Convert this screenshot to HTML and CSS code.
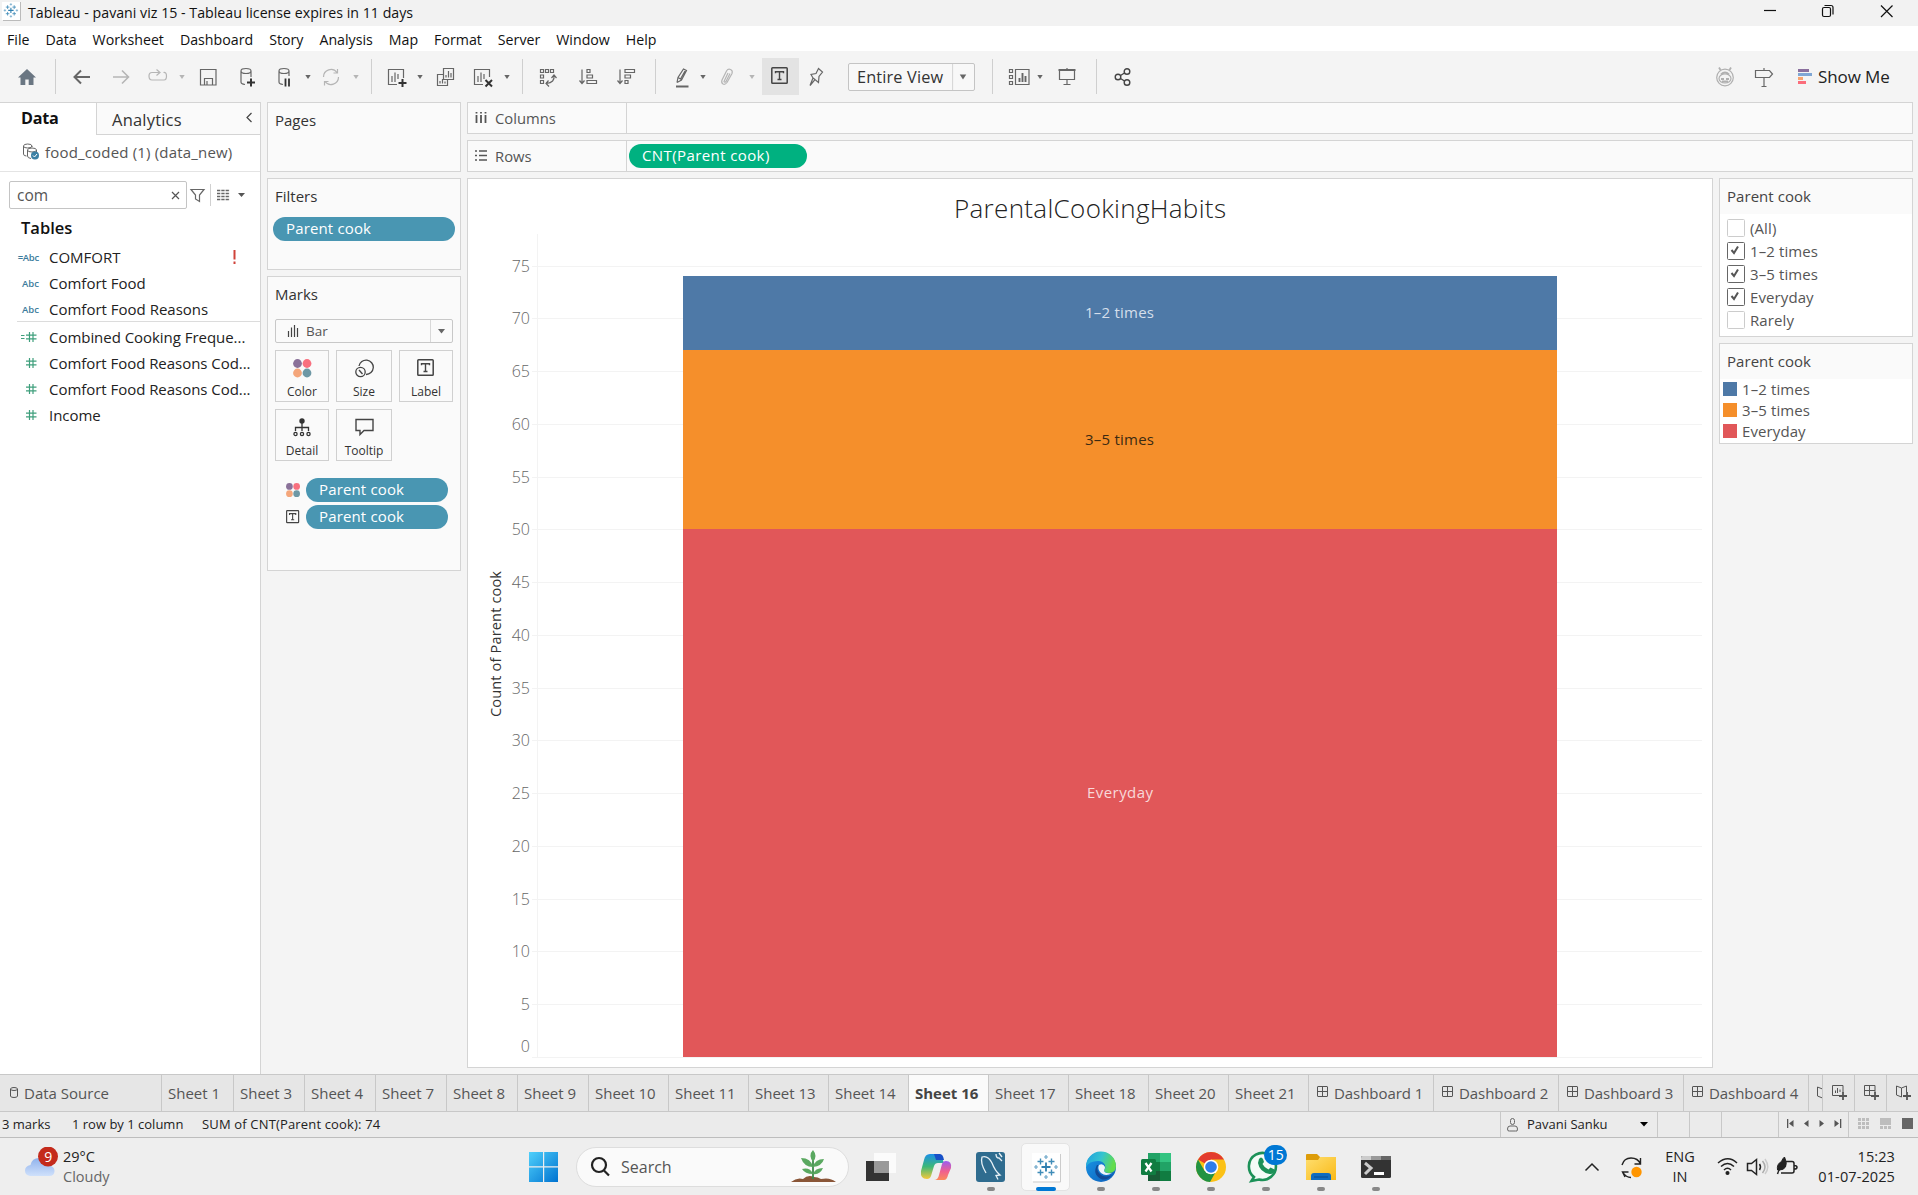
FILE: index.html
```html
<!DOCTYPE html>
<html lang="en">
<head>
<meta charset="utf-8">
<title>Tableau - pavani viz 15</title>
<link rel="stylesheet" href="styles.css">
</head>
<body>
<svg class="defs" width="0" height="0">
  <defs>
    <linearGradient id="win" x1="0" y1="0" x2="1" y2="1"><stop offset="0" stop-color="#4fd0fb"/><stop offset="1" stop-color="#0072d0"/></linearGradient>
    <linearGradient id="cloud" x1="0" y1="0" x2="0" y2="1"><stop offset="0" stop-color="#8fb2ec"/><stop offset="1" stop-color="#cfe0fb"/></linearGradient>
    <linearGradient id="cpl" x1="0" y1="0" x2="0" y2="1"><stop offset="0" stop-color="#1b8fe8"/><stop offset=".5" stop-color="#3cb878"/><stop offset="1" stop-color="#f6c83a"/></linearGradient>
    <linearGradient id="cpr" x1="0" y1="0" x2="0" y2="1"><stop offset="0" stop-color="#9a5cf0"/><stop offset=".55" stop-color="#f0608f"/><stop offset="1" stop-color="#fb8a5a"/></linearGradient>
    <linearGradient id="edge1" x1="0" y1="0" x2="1" y2=".3"><stop offset="0" stop-color="#1f9fe0"/><stop offset=".55" stop-color="#35c4cf"/><stop offset="1" stop-color="#62dc4c"/></linearGradient>
    <linearGradient id="edge2" x1="0" y1="0" x2="1" y2="1"><stop offset="0" stop-color="#1a9ae8"/><stop offset="1" stop-color="#0c5cb8"/></linearGradient>
    <linearGradient id="fold" x1="0" y1="0" x2="1" y2="1"><stop offset="0" stop-color="#ffdf70"/><stop offset="1" stop-color="#f9b917"/></linearGradient>
    <g id="logo" fill="none">
      <path d="M14 9.5v9M9.5 14h9" stroke="#2f7fb0" stroke-width="1.8"/>
      <path d="M8.5 5.5v6M5.5 8.500h6M19.500 5.500v6M16.500 8.500h6M8.500 16.500v6M5.500 19.500h6M19.500 16.500v6M16.500 19.500h6" stroke="#3f8cb8" stroke-width="1.400"/>
      <path d="M14 2v4M12 4h4M14 22v4M12 24h4M4 12v4M2 14h4M24 12v4M22 14h4" stroke="#6aa5c8" stroke-width="1.200"/>
    </g>
    <g id="dots"><circle cx="4.500" cy="4.500" r="4.400" fill="#8a7199"/><circle cx="14" cy="4.500" r="4.400" fill="#f8707f"/><circle cx="4.500" cy="14" r="4.400" fill="#f4a67b"/><circle cx="14" cy="14" r="4.400" fill="#6e98a5"/></g>
    <g id="tbox" fill="none" stroke="#444"><rect x=".8" y=".8" width="15.400" height="15.400" rx=".8" stroke-width="1.500"/><path d="M4.500 6.300V4.700h8v1.600M8.500 4.700v8M6.500 12.500h4" stroke-width="1.400"/></g>
    <g id="dash" fill="none" stroke="#555"><rect x=".5" y=".5" width="10" height="10" rx=".5"/><path d="M5.500 0v11M0 5.500h11"/></g>
    <g id="hash" fill="none" stroke="#3f9f7c" stroke-width="1.200"><path d="M3.500 0v10M7 0v10M0 3.200h10.500M0 6.800h10.500"/></g>
    <path id="caret" d="M-2.700-2h5.400L0 2z"/>
  </defs>
</svg>

<header class="titlebar">
  <svg width="28" height="26"><rect x="2" y="2" width="18" height="18" fill="#fff"/><path d="M20.500 2v18.500H3" stroke="#bbb" fill="none"/><use href="#logo" transform="translate(2.500 2) scale(.6)"/></svg>
  <span class="title">Tableau - pavani viz 15 - Tableau license expires in 11 days</span>
  <svg class="winctl" width="160" height="26" fill="none" stroke="#111" stroke-width="1.200"><path d="M6 10.500h12"/><rect x="64.500" y="7.500" width="8" height="9" rx="1.500"/><path d="M66.500 5.500h6.500q2 0 2 2v7"/><path d="M123 5.500l11.500 11.500M134.500 5.500L123 17"/></svg>
</header>

<nav class="menubar"><span>File</span><span>Data</span><span>Worksheet</span><span>Dashboard</span><span>Story</span><span>Analysis</span><span>Map</span><span>Format</span><span>Server</span><span>Window</span><span>Help</span></nav>

<div class="toolbar">
  <svg class="solid" width="40" height="24"><path d="M12 4L3 12.500h2.500V20h4.800v-5.500h3.400V20h4.800v-7.500H21z" fill="#6a7682"/></svg>
  <svg class="sep" width="15" height="35"><path d="M.5 0v35"/></svg>
  <svg width="39" height="24"><path d="M20 12H5M11 5.500L4.500 12l6.500 6.500" stroke-width="2"/></svg>
  <svg width="37" height="24" class="off"><path d="M4 12h15M13 5.500l6.500 6.500-6.500 6.500" stroke-width="1.600"/></svg>
  <svg width="50" height="24" class="off"><path d="M13 7.500H6q-3 0-3 3.500 0 4 3 4h12q2.500 0 2.500-4t-3-3.500M10.500 4.500l3.500 3-3.500 3"/><use href="#caret" x="36" y="12"/></svg>
  <svg width="38" height="24"><path d="M4.500 4.500h15.500v15.500H4.500zM8.500 19.500v-6h8v6M11 19.500v-3.500"/></svg>
  <svg width="38" height="24"><path d="M17 12V6M7 6v11q0 2 4 2.500M7 6q0-2.500 5-2.500t5 2.500-5 2.500-5-2.500"/><path d="M17 13.500v8M13 17.500h8" stroke="#333" stroke-width="2"/></svg>
  <svg width="47" height="24"><path d="M17 11V6M7 6v11q0 2 4 2.500M7 6q0-2.500 5-2.500t5 2.500-5 2.500-5-2.500"/><path d="M13.500 13.500v8M17 13.500v8" stroke="#333" stroke-width="1.800"/><use href="#caret" x="36" y="12"/></svg>
  <svg width="52" height="24" class="off"><path d="M4.500 12a7.500 7.500 0 0 1 13.500-4.500M19.500 12a7.500 7.500 0 0 1-13.500 4.500M18.500 4v4h-4M5.500 20.500v-4h4"/><use href="#caret" x="37" y="12"/></svg>
  <svg class="sep" width="13" height="35"><path d="M.5 0v35"/></svg>
  <svg width="49" height="24"><path d="M13 19.500H4.500v-15h15V13M8 11v6M11 7.500V17M14 9v5"/><path d="M18.500 14v8M14.500 18h8" stroke="#333" stroke-width="2"/><use href="#caret" x="36" y="12"/></svg>
  <svg width="38" height="24"><path d="M10.500 3.500h10v11h-10zM13 12.500V10M15.500 12.500V6M18 12.500V8M10 9.500H4.500v11H14.500V15M7 18.500V16M9.500 18.500V14M12 18.500v-2"/></svg>
  <svg width="51" height="24"><path d="M12 19.500H3.500v-15h15V12M7 11v6M10 7.500V17M13 9v5"/><path d="M14.500 15l6.500 6.500M21 15l-6.500 6.500" stroke="#333" stroke-width="2"/><use href="#caret" x="36" y="12"/></svg>
  <svg class="sep" width="14" height="35"><path d="M.5 0v35"/></svg>
  <svg width="40" height="24"><path d="M4.500 4.500h3v3h-3zM9.500 4.500h3v3h-3zM14.500 4.500h3v3h-3zM4.500 10h3v3h-3zM4.500 15.500h3v3h-3zM18 10.500q1 7-7.500 8M15.500 13l2.500-3 2.500 3M12.500 15.500l-2.500 3 3 3"/></svg>
  <svg width="38" height="24"><path d="M6 4.500V18M3.500 15.500L6 18.500l2.500-3M11 4.500h3v3h-3zM11 10h5.500v3H11zM11 15.500h9.500v3H11z"/></svg>
  <svg width="41" height="24"><path d="M6 4.500V18M3.500 15.500L6 18.500l2.500-3M11 4.500h9.500v3H11zM11 10h5.500v3H11zM11 15.500h3v3h-3z"/></svg>
  <svg class="sep" width="15" height="35"><path d="M.5 0v35"/></svg>
  <svg width="46" height="24"><path d="M7 17.500l1-5L13.500 4l3 1.500-5 9.500-4.500 2.500M8 12.500l3.500 2M15 6l-4.500 8"/><path d="M6 21.500h12.500" stroke-width="2"/><use href="#caret" x="33" y="12"/></svg>
  <svg width="46" height="24" class="off"><path d="M11 17.500l5-9q1-3-1.500-4T10.500 6l-4.500 9q-1 3 1 4t4-1.500M14 8.500l-4 8q-1.500 1.500-2 0l4-8.500"/><use href="#caret" x="36" y="12"/></svg>
  <svg width="42" height="37"><rect width="37" height="37" fill="#e3e3e3" stroke="none"/><use href="#tbox" x="9" y="9"/></svg>
  <svg width="44" height="24"><path d="M14.500 3.500L12 8.500l-5 1 2 3.500-3 7.500 5-6 3.500 3 .5-6 3.500-4.500zM9 13l2 1.500"/></svg>
  <div class="fit"><span>Entire View</span><svg width="22" height="26"><path d="M.5 0v26" stroke="#d8d8d8"/><use href="#caret" transform="translate(11 13) scale(1.200)"/></svg></div>
  <svg class="sep" width="15" height="35"><path d="M.5 0v35"/></svg>
  <svg width="48" height="24"><path d="M2.500 4.500h3v3h-3zM2.500 10.500h3v3h-3zM2.500 16.500h3v3h-3zM8.500 4.500h13.500v15H8.500z"/><path d="M12.500 17v-4M15.500 17V8M18.500 17v-6" stroke-width="1.900"/><use href="#caret" x="33" y="12"/></svg>
  <svg width="41" height="24"><path d="M4.500 5.500v9h15v-9M12 14.500v5M8.500 19.500h7M12 3v3"/><path d="M3.500 5h17" stroke-width="2"/></svg>
  <svg class="sep" width="15" height="35"><path d="M.5 0v35"/></svg>
  <svg width="40" height="24"><g stroke="#444" stroke-width="1.400"><circle cx="7" cy="12" r="2.800"/><circle cx="16" cy="6.500" r="2.800"/><circle cx="16" cy="17.500" r="2.800"/><path d="M9.500 10.500L13.500 8M9.500 13.500L13.500 16"/></g></svg>
  <div class="right">
    <svg width="39" height="24"><g stroke="#b0b0b0"><circle cx="12" cy="12.500" r="8.300"/><ellipse cx="12" cy="13.500" rx="6" ry="4.500"/><path d="M7.500 5l-1.500-2.500M16.500 5L18 2.500M8 9.500q4-4 8 0M8 14h3M13 14h3M9 16.500h6" stroke-width="1.800"/></g></svg>
    <svg width="46" height="24"><path d="M3.500 5.500h14l3 3.500-3 3.500h-14zM12 3v2.500M12 12.500v9M9.500 21.500h5" stroke-width="1.200"/></svg>
    <svg class="solid" width="20" height="24"><path d="M0 4h11v3H0z" fill="#8a6f9e"/><path d="M0 8h14v3H0z" fill="#7fa6d4"/><path d="M0 12h5v3H0z" fill="#f6a36f"/><path d="M0 16h8v3H0z" fill="#fb6d7b"/></svg>
    <span class="showme">Show Me</span>
  </div>
</div>

<main class="work">
  <aside class="data">
    <div class="tabs"><b>Data</b><span class="analytics">Analytics<svg width="8" height="12"><path d="M5.500 1L1 5.500 5.500 10" fill="none" stroke="#444" stroke-width="1.200"/></svg></span></div>
    <div class="source"><svg width="22" height="18" fill="none" stroke="#666"><path d="M.5 3v8q0 2 3 2M9 4V3M.5 3q0-2 4.200-2T9 3 4.700 5 .5 3M4.500 7v6q0 2 3.500 2.500M13.500 9V7M4.500 7q0-2 4.500-2t4.500 2-4.500 2-4.500-2"/><circle cx="12" cy="12.500" r="4" fill="#3c80a4" stroke="none"/><path d="M10 12.500l1.500 1.500 2.500-3" stroke="#fff"/></svg><span>food_coded (1) (data_new)</span></div>
    <div class="search"><div class="box"><span>com</span><svg width="9" height="9"><path d="M1 1l7 7M8 1L1 8" stroke="#555" stroke-width="1.200"/></svg></div>
      <svg width="70" height="22" fill="none" stroke="#666"><path d="M4 5.500h13L12.500 11v6.500l-4-2.500v-4z" stroke-width="1.200"/><path d="M23.500 0v22" stroke="#d0d0d0"/><path d="M30 6.500h13M30 9.500h13M30 12.500h13M30 15.500h13" stroke-dasharray="3.300 1" stroke-width="1.400"/><path d="M51 9h7l-3.500 4z" fill="#555" stroke="none"/></svg></div>
    <h3>Tables</h3>
    <ul class="fields">
      <li><i class="calc">=Abc</i><span>COMFORT</span><em><svg width="3" height="14" fill="#d0433a"><path d="M.5 0h2v9.500h-2zM.5 11.500h2V14h-2z"/></svg></em></li>
      <li><i>Abc</i><span>Comfort Food</span></li>
      <li><i>Abc</i><span>Comfort Food Reasons</span></li>
    </ul>
    <ul class="fields measures">
      <li><i><svg width="16" height="10"><path d="M0 3.500h3.500M0 6.500h3.500" stroke="#3f9f7c"/><use href="#hash" x="5"/></svg></i><span>Combined Cooking Freque...</span></li>
      <li><i><svg width="11" height="10"><use href="#hash"/></svg></i><span>Comfort Food Reasons Cod...</span></li>
      <li><i><svg width="11" height="10"><use href="#hash"/></svg></i><span>Comfort Food Reasons Cod...</span></li>
      <li><i><svg width="11" height="10"><use href="#hash"/></svg></i><span>Income</span></li>
    </ul>
  </aside>

  <aside class="cards">
    <section class="card pages"><h4>Pages</h4></section>
    <section class="card filters"><h4>Filters</h4><div class="pill">Parent cook</div></section>
    <section class="card marks"><h4>Marks</h4>
      <div class="type"><svg width="20" height="12"><path d="M2.500 6v6M5.500 2.500V12M8.500 0v12M11.500 3v9" stroke="#444" stroke-width="1.200"/></svg><span>Bar</span><svg class="dd" width="22" height="22"><path d="M.5 0v22" stroke="#d8d8d8"/><path d="M8 9h7l-3.500 4.500z" fill="#666"/></svg></div>
      <div class="grid">
        <div><svg width="19" height="19"><use href="#dots"/></svg>Color</div>
        <div><svg width="19" height="19" fill="none" stroke="#444" stroke-width="1.300"><path d="M4 7a7.200 7.200 0 1 1 7 8.500"/><circle cx="5.500" cy="13" r="4.700"/><path d="M4 11l3.500 4"/></svg>Size</div>
        <div><svg width="18" height="19"><use href="#tbox"/></svg>Label</div>
        <div><svg width="19" height="19" fill="none" stroke="#333" stroke-width="1.300"><circle cx="9" cy="3" r="2.700" fill="#333" stroke="none"/><path d="M9 3v10M2.500 13V9.500h13V13"/><circle cx="2.500" cy="16" r="1.600"/><circle cx="9" cy="16" r="1.600"/><circle cx="15.500" cy="16" r="1.600"/></svg>Detail</div>
        <div><svg width="19" height="19" fill="none" stroke="#444" stroke-width="1.400"><path d="M1 1.500h17v11H9L5 16.500v-4H1z"/></svg>Tooltip</div>
      </div>
      <div class="enc"><svg width="20" height="16"><use href="#dots" transform="translate(0 1) scale(.76)"/></svg><div class="pill">Parent cook</div></div>
      <div class="enc"><svg width="20" height="16"><use href="#tbox" transform="translate(0 1) scale(.78)"/></svg><div class="pill">Parent cook</div></div>
    </section>
  </aside>

  <div class="canvas">
    <div class="shelf"><div class="name"><svg width="12" height="12"><path d="M1.500 0v1.500M6 0v1.500M10.500 0v1.500M1.500 3v8M6 3v8M10.500 3v8" stroke="#555" stroke-width="1.800"/></svg>Columns</div></div>
    <div class="shelf"><div class="name"><svg width="12" height="12"><path d="M0 1h2M0 5.500h2M0 10h2M4 1h8M4 5.500h8M4 10h8" stroke="#555" stroke-width="1.600"/></svg>Rows</div><div class="pill green">CNT(Parent cook)</div></div>
    <div class="view">
      <svg class="chart" width="1244" height="888" viewBox="468 179 1244 888">
        <text x="954" y="217.500" class="ttl" textLength="272">ParentalCookingHabits</text>
        <path class="gl" d="M532 266.500h1170M532 318.500h1170M532 371.500h1170M532 424.500h1170M532 477.500h1170M532 529.500h1170M532 582.500h1170M532 635.500h1170M532 688.500h1170M532 740.500h1170M532 793.500h1170M532 846.500h1170M532 899.500h1170M532 951.500h1170M532 1004.500h1170M532 1057.500h1170M537.500 234v823"/>
        <path fill="#4e79a7" d="M683 276h874v74H683z"/><path fill="#f58f2b" d="M683 350h874v179H683z"/><path fill="#e15759" d="M683 529h874v528H683z"/>
        <g class="ax">
          <text x="530" y="272">75</text><text x="530" y="324">70</text><text x="530" y="377">65</text><text x="530" y="430">60</text><text x="530" y="483">55</text><text x="530" y="535">50</text><text x="530" y="588">45</text><text x="530" y="641">40</text><text x="530" y="694">35</text><text x="530" y="746">30</text><text x="530" y="799">25</text><text x="530" y="852">20</text><text x="530" y="905">15</text><text x="530" y="957">10</text><text x="530" y="1010">5</text><text x="530" y="1052">0</text>
        </g>
        <text class="axt" transform="translate(501 717) rotate(-90)" textLength="146">Count of Parent cook</text>
        <text class="lb" x="1085" y="318" textLength="69" fill="#d5dfeb">1–2 times</text>
        <text class="lb" x="1085" y="445" textLength="69" fill="#3b2a12">3–5 times</text>
        <text class="lb" x="1087" y="798" textLength="66" fill="#f8d9d9">Everyday</text>
      </svg>
      <div class="legends">
        <section class="card lf"><h4>Parent cook</h4>
          <p><svg width="18" height="18"><rect class="un" x=".5" y=".5" width="17" height="17" rx="1"/></svg>(All)</p>
          <p><svg width="18" height="18"><rect class="ck" x=".5" y=".5" width="17" height="17" rx="1"/><path d="M4.500 8l2.500 3 4-6.500"/></svg>1–2 times</p>
          <p><svg width="18" height="18"><rect class="ck" x=".5" y=".5" width="17" height="17" rx="1"/><path d="M4.500 8l2.500 3 4-6.500"/></svg>3–5 times</p>
          <p><svg width="18" height="18"><rect class="ck" x=".5" y=".5" width="17" height="17" rx="1"/><path d="M4.500 8l2.500 3 4-6.500"/></svg>Everyday</p>
          <p><svg width="18" height="18"><rect class="un" x=".5" y=".5" width="17" height="17" rx="1"/></svg>Rarely</p>
        </section>
        <section class="card lc"><h4>Parent cook</h4>
          <p><i class="c1"></i>1–2 times</p><p><i class="c2"></i>3–5 times</p><p><i class="c3"></i>Everyday</p>
        </section>
      </div>
    </div>
  </div>
</main>

<div class="sheets">
  <span class="ds"><svg width="15" height="14" fill="none" stroke="#555"><path d="M1.500 3v7q0 1.500 3.500 1.500T8.500 10V3M1.500 3Q1.500 1.500 5 1.500T8.500 3 5 4.500 1.500 3"/></svg>Data Source</span>
  <span class="s1">Sheet 1</span><span>Sheet 3</span><span>Sheet 4</span><span>Sheet 7</span><span>Sheet 8</span><span>Sheet 9</span>
  <span class="w">Sheet 10</span><span class="w">Sheet 11</span><span class="w">Sheet 13</span><span class="w">Sheet 14</span><span class="w on">Sheet 16</span><span class="w">Sheet 17</span><span class="w">Sheet 18</span><span class="w">Sheet 20</span><span class="w">Sheet 21</span>
  <span class="d"><svg width="17" height="14"><use href="#dash"/></svg>Dashboard 1</span><span class="d"><svg width="17" height="14"><use href="#dash"/></svg>Dashboard 2</span><span class="d"><svg width="17" height="14"><use href="#dash"/></svg>Dashboard 3</span><span class="d"><svg width="17" height="14"><use href="#dash"/></svg>Dashboard 4</span>
  <span class="cut"><svg width="6" height="14"><path d="M5.500 3L.5 1v9l5 2" fill="none" stroke="#555"/></svg></span>
  <span class="n"><svg width="16" height="16"><path d="M8 10.500H.5V.5h10.500v7M3.500 8V5.500M5.500 8V3M8 7V4.500" fill="none" stroke="#555"/><path d="M11 7v8M7 11h8" stroke="#555" stroke-width="1.800"/></svg></span>
  <span class="n"><svg width="16" height="16"><path d="M8 10.500H.5V.5h10.500v7M5.500 0v11M0 5.500h11" fill="none" stroke="#555"/><path d="M11 7v8M7 11h8" stroke="#555" stroke-width="1.800"/></svg></span>
  <span class="n"><svg width="16" height="16"><path d="M.5 1L5.500 3 10.500 1v6M.5 1v9l5 2V3" fill="none" stroke="#555"/><path d="M11 7v8M7 11h8" stroke="#555" stroke-width="1.800"/></svg></span>
</div>

<div class="status">
  <span class="m1">3 marks</span><span class="m2">1 row by 1 column</span><span class="m3">SUM of CNT(Parent cook): 74</span>
  <div class="user"><svg width="12" height="14" fill="none" stroke="#666"><rect x="3.500" y=".5" width="4" height="6" rx="2"/><path d="M.5 11q0-3 2.500-3h5q2.500 0 2.500 3t-2 2h-6q-2 .5-2-2z"/></svg><span>Pavani Sanku</span><svg width="8" height="5"><path d="M0 0h8L4 4.500z"/></svg></div>
  <div class="c32"></div><div class="c32"></div><div class="c57"></div>
  <div class="nav"><svg width="56" height="9" fill="#555"><path d="M1 0h1.300v9H1zM7.500 1v7L3 4.500zM22.500 1v7L18 4.500zM33.500 1v7L38 4.500zM48.500 1v7L53 4.500zM54 0h1.300v9H54z"/></svg></div>
  <svg width="68" height="25"><g fill="#bdbdbd"><path d="M9 6h3v3H9zM13 6h3v3h-3zM17 6h3v3h-3zM9 10h3v3H9zM13 10h3v3h-3zM17 10h3v3h-3zM9 14h3v3H9zM13 14h3v3h-3zM17 14h3v3h-3zM31 6h11v7H31zM31 14h3v3h-3zM35 14h3v3h-3zM39 14h3v3h-3z"/></g><path d="M53 6h11v11H53z" fill="#666"/></svg>
</div>

<footer class="taskbar">
  <div class="weather"><svg width="39" height="40"><path d="M6 29q-5-1-5-5.500T6.500 18Q8 10.500 16 11q8 1 8.500 7.500 6 .5 6 5.500T25 29z" fill="url(#cloud)"/><circle cx="24" cy="9.500" r="10" fill="#c42b1c"/><text x="20.300" y="14.500" fill="#fff" font-size="14">9</text></svg><div>29°C<br><em>Cloudy</em></div></div>
  <svg class="start" width="29" height="30" fill="url(#win)"><path d="M0 0h14v14.300H0zM15.200 0H29v14.300H15.200zM0 15.500h14V30H0zM15.200 15.500H29V30H15.200z"/></svg>
  <div class="find"><svg width="31" height="22" fill="none" stroke="#222" stroke-width="2.200"><circle cx="9" cy="9" r="7"/><path d="M14 14.500l5 5"/></svg><span>Search</span>
    <svg width="46" height="34"><path d="M0 32q6-5 12-3 5-5 11-2 4 0 7 2 9-2 15 3z" fill="#8a5638"/><path d="M22 29V6" stroke="#3f8a4a" stroke-width="1.800"/><path d="M22 12Q17 5 22 0q5 6 0 12M22 17q-9 0-12-9 10 0 12 9M22 17q9-1 11-8-9 0-11 8M22 24q-8 0-11-5 8-2 11 5M22 24q7 1 10-6-8 0-10 6" fill="#5aa860"/></svg></div>
  <div class="apps">
    <span><svg width="32" height="32"><path d="M1 10h23v20H1z" fill="#333" /><path d="M9 2h22v20H9z" fill="#fff" opacity=".75"/><path d="M9 10h15v12H9z" fill="#999"/></svg></span>
    <span><svg width="32" height="32"><path d="M8 3h10q3 0 4 4l2 5h-6q-3 0-4 3l-3 10q-1 3-4 3-7 0-6-8L4 9q1-6 6-6z" fill="url(#cpl)"/><path d="M14 3h6q3 0 4 6h-8z" fill="#1750c8"/><path d="M24 29H14q4 0 5-5l3-11q1-3 4-3 6 0 5 7l-3 7q-1 5-4 5z" fill="url(#cpr)"/></svg></span>
    <span class="run"><svg width="32" height="32"><rect x="1" y="1" width="29" height="30" rx="3" fill="#2f6c8f"/><path d="M11 22q-6-10-4-16 6-2 10 6 3 8 8 12l-4 .500 2 4M21 3q0 4 3 4l3 3M24 2l3 4" fill="none" stroke="#e8f1f6" stroke-width="1.300"/></svg></span>
    <span class="run active"><svg width="32" height="32"><path d="M2 2h28v28H2z" fill="#fff"/><path d="M30.500 3v28H3" fill="none" stroke="#ccc"/><use href="#logo" x="2" y="2"/></svg></span>
    <span class="run"><svg width="32" height="32"><circle cx="16" cy="16" r="15" fill="url(#edge2)"/><path d="M1 16A15 15 0 0 1 31 15q0 7-7 7-5 0-5-3 2-2 1-5-2-4-7-4Q4 10 1 16z" fill="url(#edge1)"/><path d="M12 14q-5 9 4 14 6 2 11-4-8 4-13-2-3-4-.5-8z" fill="#124a94"/><path d="M14 14q4-2 6 2 0 2-1 3 0 4 8 3-6 4-11 0-4-4-2-8z" fill="#eef4fa"/></svg></span>
    <span class="run"><svg width="32" height="32"><path d="M8 2h12v9H8z" fill="#21a366"/><path d="M20 2h11v9H20z" fill="#33c481"/><path d="M8 11h12v9H8z" fill="#107c41"/><path d="M20 11h11v9H20z" fill="#21a366"/><path d="M8 20h23v10H8z" fill="#185c37"/><path d="M20 20h11v10H20z" fill="#107c41"/><rect x="1" y="8" width="15" height="16" rx="1.500" fill="#107c41"/><path d="M5.500 12l6 8.500M11.500 12l-6 8.500" stroke="#fff" stroke-width="2.200"/></svg></span>
    <span class="run"><svg width="32" height="32"><circle cx="16" cy="16" r="15" fill="#fbc116"/><path d="M16 16L3 8.500A15 15 0 0 1 29 8.500H16z" fill="#e33b2e"/><path d="M3 8.500A15 15 0 0 0 15 31l6.500-11.500L9.500 19.700z" fill="#229342"/><circle cx="16" cy="16" r="7.300" fill="#fff"/><circle cx="16" cy="16" r="5.800" fill="#2f7de9"/></svg></span>
    <span class="run"><svg class="wa" width="42" height="40"><path d="M8 32a13.500 13.500 0 1 1 5 2.500L5.500 36z" fill="#f4fbf7" stroke="#1c9158" stroke-width="2.600"/><path d="M13 14q2-3 4 0l1 3-1.500 2q2 4 6 5.500l2-2 4 2q0 5-5 4.500-10-2-11.500-11z" fill="#1c9158"/><rect x="18" y="0" width="23" height="20" rx="10" fill="#0078d4"/><text x="21.800" y="15" font-size="14" fill="#fff">15</text></svg></span>
    <span class="run"><svg width="32" height="32"><path d="M1 4q0-1 1-1h10l3 3v5H1z" fill="#dd9c08"/><path d="M1 9l12 0 2-3h16v23H1z" fill="url(#fold)"/><path d="M6 29v-4q0-3 3-3h14q3 0 3 3v4z" fill="#0f6cc0"/><path d="M9 26h14" stroke="#0a4a8c"/></svg></span>
    <span class="run"><svg width="32" height="32"><rect x="1" y="5" width="30" height="22" rx="1.500" fill="#333"/><path d="M1 9V6.500Q1 5 2.500 5H11v4z" fill="#ccc"/><path d="M11 5h10v4H11z" fill="#999"/><path d="M21 5h10v4H21z" fill="#666"/><path d="M5 12l6 5-6 6" fill="none" stroke="#ccc" stroke-width="3"/><path d="M14 22.500h10" stroke="#fff" stroke-width="3"/></svg></span>
  </div>
  <div class="tray">
    <svg width="80" height="30" fill="none" stroke="#222" stroke-width="1.500"><path d="M17.500 18.500l6.500-6.500 6.500 6.500"/><path d="M54 13q2-7 9-7t9.500 6M72.500 6v6h-6M57 25l-2.500-5h6M55 20.500q3 5 8 5" stroke-width="1.400"/><circle cx="68.500" cy="20" r="5.200" fill="#ff9500" stroke="none"/></svg>
    <div class="lang">ENG<br>IN</div>
    <svg width="90" height="26" fill="none" stroke="#222" stroke-width="1.500"><path d="M6 9q10-8.500 19 0M9 12.500q6.500-6 13 0M12 16q3.500-3.500 7 0"/><circle cx="15.500" cy="19" r="1.300" fill="#222"/><path d="M35.500 9.500h4l5-4v15l-5-4h-4zM47.500 10q2 3 0 6"/><path d="M50.500 7q5 6 0 12" stroke="#aaa"/><path d="M53 5q5.500 8 0 15" stroke="#ccc"/><path d="M74 7.500h6q2 0 2 2v7.500q0 2-2 2H69M82.500 11.500q2.500 0 2.500 1.800t-2.500 1.800"/><path d="M65.500 16q-1-6 4-8.500 1-3 3-4.500 3 6 1 10-2 3-6 3z" fill="#222" stroke-width="1"/><path d="M65.500 20q1-4 4-7"/></svg>
    <div class="clock">15:23<br>01-07-2025</div>
  </div>
</footer>
</body>
</html>
```
FILE: styles.css
```css
* { box-sizing: border-box; margin: 0; padding: 0; }
body { width: 1918px; height: 1195px; overflow: hidden; display: flex; flex-direction: column; background: #f4f4f4; font: 15px "Open Sans", "Noto Sans", sans-serif; color: #333; white-space: nowrap; }
svg { display: block; flex: none; }
.defs { position: absolute; }
i, em { font-style: normal; }
ul { list-style: none; }

.titlebar { height: 26px; background: #f2f2f2; display: flex; align-items: center; flex: none; }
.title { font-size: 14.200px; color: #111; margin-top: -2px; letter-spacing: .01px; }
.winctl { margin-left: auto; width: 160px; }
.menubar { height: 25px; background: #fff; display: flex; gap: 16px; padding-left: 7px; align-items: center; font-size: 14.200px; color: #111; flex: none; letter-spacing: 0; line-height: 25px; }
.menubar span { margin-top: 1px; }

.toolbar { height: 51px; display: flex; align-items: center; padding-left: 15px; flex: none; }
.toolbar svg { fill: none; stroke: #666; stroke-width: 1.200; }
.toolbar .solid { stroke: none; }
.toolbar use[href="#caret"] { fill: #666; stroke: none; }
.toolbar .off { stroke: #b5b5b5; }
.toolbar .off use[href="#caret"] { fill: #b5b5b5; }
.toolbar .sep { stroke: #cfcfcf; stroke-width: 1; }
.fit { width: 127px; height: 28px; border: 1px solid #c4c4c4; border-radius: 2px; background: #f8f8f8; display: flex; justify-content: space-between; align-items: center; padding-left: 8px; margin-right: 17px; font-size: 16.300px; letter-spacing: .15px; }
.right { margin-left: auto; margin-right: 29px; display: flex; align-items: center; width: 176px; }
.showme { font-size: 17px; color: #222; letter-spacing: -.1px; margin-top: -1px; }

.work { height: 972px; display: flex; flex: none; }
.data { width: 261px; background: #fff; border-right: 1px solid #d4d4d4; border-top: 1px solid #d4d4d4; }
.tabs { display: flex; height: 32px; line-height: 31px; }
.tabs b { width: 96px; padding-left: 21px; color: #111; font-size: 16.200px; font-weight: 700; letter-spacing: -.3px; }
.analytics { flex: 1; border-left: 1px solid #d4d4d4; border-bottom: 1px solid #d4d4d4; background: #fafafa; padding: 2px 6px 0 15px; display: flex; justify-content: space-between; align-items: center; font-size: 16.500px; letter-spacing: .2px; }
.analytics svg { margin-top: -3px; }
.source { height: 37px; border-bottom: 1px solid #e4e4e4; display: flex; align-items: center; padding-left: 23px; padding-bottom: 2px; color: #555; letter-spacing: .18px; }
.search { display: flex; align-items: center; padding: 9px 0 0 9px; }
.box { width: 178px; height: 28px; border: 1px solid #c4c4c4; border-radius: 2px; display: flex; justify-content: space-between; align-items: center; padding: 0 6px 0 7px; font-size: 15.500px; color: #555; }
.data h3 { font-size: 16.500px; font-weight: 600; color: #111; line-height: 26px; padding: 6px 0 3px 21px; }
.fields li { height: 26px; display: flex; align-items: center; color: #222; }
.fields i { width: 49px; padding-right: 10px; display: flex; justify-content: flex-end; color: #3c7c9c; font-size: 9.500px; font-weight: 600; }
.fields .calc { letter-spacing: -.25px; }
.fields em { margin-left: auto; margin-right: 24px; }
.measures { border-top: 1px solid #dcdcdc; margin-left: 17px; padding-top: 2px; margin-top: -1px; }
.measures li { letter-spacing: -.04px; }
.measures i { width: 32px; padding-right: 12px; }

.cards { width: 206px; padding-left: 6px; }
.card { background: #fafafa; border: 1px solid #d4d4d4; }
.cards .card { width: 194px; padding: 0 5px; }
.card h4 { font-size: 15px; font-weight: 400; line-height: 34px; padding-left: 2px; }
.pages { height: 70px; }
.filters { height: 92px; margin-top: 6px; }
.marks { height: 295px; margin-top: 6px; }
.pill { height: 24px; border-radius: 12px; background: #4996b2; color: #fff; line-height: 23px; padding-left: 13px; font-weight: 500; font-size: 15px; letter-spacing: .15px; }
.filters .pill { margin: 4px 0 0 0; }
.type { width: 178px; height: 24px; margin: 8px 0 7px 2px; border: 1px solid #c8c8c8; border-radius: 2px; display: flex; align-items: center; padding-left: 10px; font-size: 13.500px; color: #555; }
.type .dd { margin-left: auto; }
.grid { display: grid; grid-template-columns: 54px 56px 54px; grid-auto-rows: 52px; gap: 7px; margin: 0 0 17px 2px; font-size: 12px; }
.grid div { border: 1px solid #d0d0d0; display: flex; flex-direction: column; align-items: center; padding-top: 8px; line-height: 16px; gap: 6px; }
.enc { display: flex; align-items: center; padding-left: 13px; margin-bottom: 3px; }
.enc .pill { width: 142px; }

.canvas { flex: 1; }
.shelf { width: 1446px; height: 32px; border: 1px solid #d4d4d4; background: #fafafa; display: flex; margin-bottom: 6px; align-items: center; }
.name { width: 159px; height: 30px; border-right: 1px solid #d4d4d4; display: flex; align-items: center; gap: 8px; padding-left: 7px; color: #555; font-size: 14.800px; }
.green { background: #00b180; width: 178px; margin-left: 2px; letter-spacing: .4px; }
.view { display: flex; gap: 6px; }
.chart { background: #fff; outline: 1px solid #d4d4d4; margin: 1px 0 0 1px; }
.legends { width: 194px; margin-left: 1px; }
.chart text { font-family: "Open Sans", sans-serif; }
.gl { stroke: #f3f3f3; fill: none; }
.ttl { font-size: 26px; font-weight: 300; fill: #222; }
.ax { font-size: 16px; fill: #666; text-anchor: end; font-weight: 300; }
.axt { font-size: 14.500px; fill: #333; }
.lb { font-size: 15px; }
.lf { height: 159px; margin-bottom: 6px; }
.lc { height: 101px; }
.legends .card { background: linear-gradient(#fafafa 35px, #fff 35px); color: #555; }
.legends h4 { padding-left: 7px; line-height: 34px; color: #444; letter-spacing: .05px; }
.legends p { display: flex; align-items: center; gap: 5px; font-size: 15px; letter-spacing: .1px; }
.lf p { height: 23px; padding-left: 7px; }
.lf h4 { margin-bottom: 3px; }
.lf rect { fill: #fff; }
.lf .un { stroke: #ccc; }
.lf .ck { stroke: #666; }
.lf path { fill: none; stroke: #555; stroke-width: 2; }
.lc p { height: 21px; padding-left: 3px; }
.lc i { width: 14px; height: 14px; }
.c1 { background: #4e79a7; } .c2 { background: #f58f2b; } .c3 { background: #e15759; }

.sheets { height: 38px; border-top: 1px solid #c8c8c8; border-bottom: 1px solid #c8c8c8; background: #e6e6e6; display: flex; flex: none; color: #555; }
.sheets span { width: 71px; border-right: 1px solid #c8c8c8; padding-left: 6px; display: flex; align-items: center; overflow: hidden; flex: none; font-size: 15px; }
.sheets .ds { width: 162px; padding-left: 9px; }
.sheets .s1 { width: 72px; }
.sheets .w { width: 80px; }
.sheets .d { width: 125px; padding-left: 8px; letter-spacing: -.05px; }
.sheets .cut { width: 14px; padding-left: 8px; }
.sheets .n { width: 32px; padding-left: 9px; }
.sheets .on { background: #fafafa; font-weight: 700; color: #444; padding-bottom: 1px; }
.status { height: 26px; background: #ebebeb; border-bottom: 1px solid #bdbdbd; display: flex; align-items: center; font-size: 13px; color: #222; flex: none; }
.status span { padding-bottom: 2px; }
.m1 { width: 70px; padding-left: 2px; } .m2 { width: 130px; padding-left: 2px; } .m3 { width: 1300px; padding-left: 2px; letter-spacing: .16px; }
.status div { height: 25px; border-left: 1px solid #c8c8c8; display: flex; align-items: center; }
.user { width: 157px; padding: 0 9px 0 6px; }
.status .user span { margin: 0 auto 0 8px; }
.c32 { width: 32px; } .c57 { width: 57px; }
.status .nav { width: 71px; padding-left: 7px; padding-bottom: 2px; border-right: 1px solid #c8c8c8; }

.taskbar { height: 57px; background: #eee; display: flex; align-items: center; flex: none; font-size: 14.500px; color: #222; }
.weather { display: flex; width: 529px; padding-left: 24px; line-height: 20px; }
.weather em { color: #666; }
.find { width: 273px; height: 40px; border: 1px solid #ddd; border-radius: 20px; background: #fafafa; margin-left: 18px; display: flex; align-items: center; padding: 0 11px 0 13px; font-size: 16px; color: #555; }
.find span { margin-right: auto; }
.apps { display: flex; margin-left: 4px; }
.apps span { width: 55px; height: 50px; display: flex; justify-content: center; align-items: center; position: relative; }
.wa { margin: -3px 0 0 2px; }
.run::after { content: ""; position: absolute; bottom: 1px; width: 8px; height: 4px; border-radius: 2px; background: #888; }
.active::before { content: ""; position: absolute; inset: 1px 3px; background: #f9f9f9; border: 1px solid #e3e3e3; border-radius: 5px; }
.active svg { position: relative; }
.apps .active::after { width: 20px; background: #0078d4; }
.tray { margin-left: auto; display: flex; align-items: center; line-height: 20px; }
.lang { width: 64px; text-align: center; }
.clock { text-align: right; width: 93px; margin-right: 23px; letter-spacing: .1px; }
```
